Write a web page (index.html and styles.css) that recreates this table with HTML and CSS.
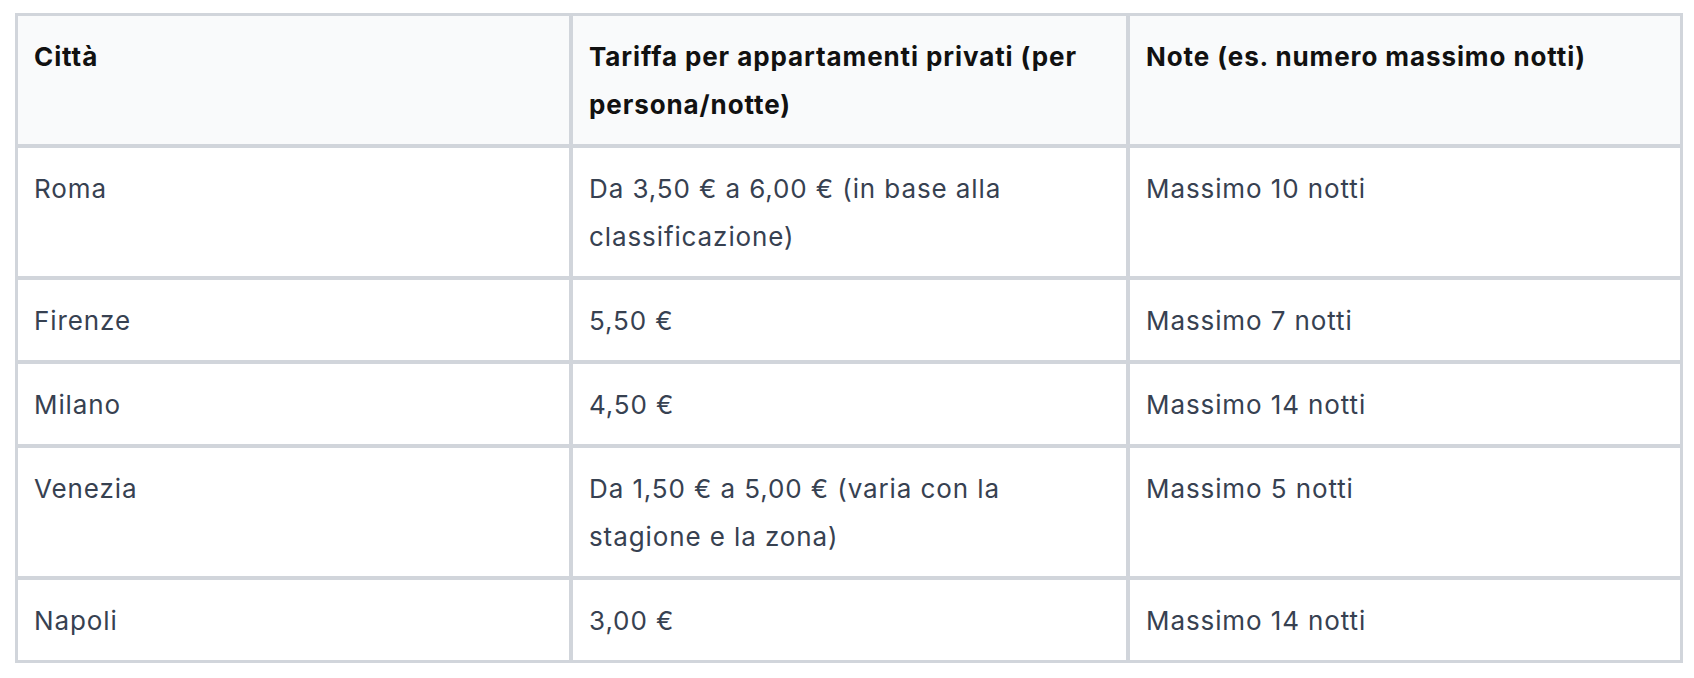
FILE: index.html
```html
<!DOCTYPE html>
<html lang="it">
<head>
<meta charset="utf-8">
<title>Tariffe</title>
<link rel="stylesheet" href="styles.css">
</head>
<body>
<div class="wrap">
<table class="rates">
  <colgroup><col class="c1"><col class="c2"><col class="c3"></colgroup>
  <thead>
    <tr>
      <th>Città</th>
      <th>Tariffa per appartamenti privati (per persona/notte)</th>
      <th>Note (es. numero massimo notti)</th>
    </tr>
  </thead>
  <tbody>
    <tr><td>Roma</td><td>Da 3,50 € a 6,00 € (in base alla classificazione)</td><td>Massimo 10 notti</td></tr>
    <tr><td>Firenze</td><td>5,50 €</td><td>Massimo 7 notti</td></tr>
    <tr><td>Milano</td><td>4,50 €</td><td>Massimo 14 notti</td></tr>
    <tr><td>Venezia</td><td>Da 1,50 € a 5,00 € (varia con la stagione e la zona)</td><td>Massimo 5 notti</td></tr>
    <tr><td>Napoli</td><td>3,00 €</td><td>Massimo 14 notti</td></tr>
  </tbody>
</table>
</div>
</body>
</html>
```
FILE: styles.css
```css
html, body {
  margin: 0;
  padding: 0;
  background: #ffffff;
}
.wrap {
  padding: 13px 0 0 15px;
}
.rates {
  width: 1668px;
  table-layout: fixed;
  border-collapse: separate;
  border-spacing: 0;
  border: 3px solid #d1d5db;
  font-family: Inter, "Noto Sans", sans-serif;
  font-size: 26px;
  line-height: 48px;
  letter-spacing: 0.9px;
}
.c1 { width: 555px; }
.c2 { width: 557px; }
.c3 { width: auto; }
.rates th,
.rates td {
  padding: 17px 16px 15px 16px;
  text-align: left;
  vertical-align: top;
  border-right: 4px solid #d1d5db;
  border-bottom: 4px solid #d1d5db;
}
.rates th:last-child,
.rates td:last-child {
  border-right: none;
}
.rates tbody tr:last-child td {
  border-bottom: none;
}
.rates th {
  background: #f9fafb;
  color: #111111;
  font-weight: 700;
}
.rates td {
  color: #374151;
  font-weight: 400;
}
```
